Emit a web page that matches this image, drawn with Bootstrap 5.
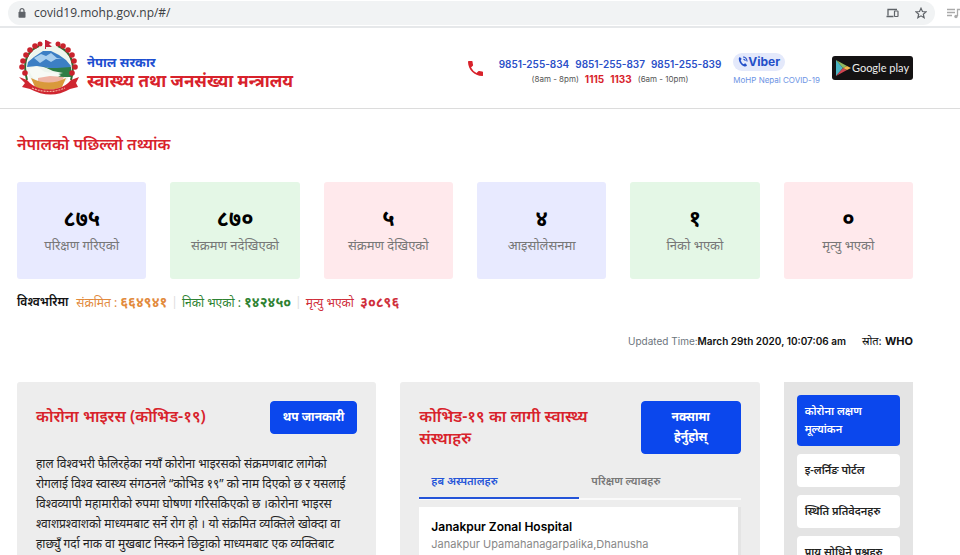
<!DOCTYPE html>
<html lang="hi">
<head>
<meta charset="utf-8">
<meta name="viewport" content="width=device-width, initial-scale=1">
<title>COVID-19 | स्वास्थ्य तथा जनसंख्या मन्त्रालय</title>
<link href="https://cdn.jsdelivr.net/npm/bootstrap@5.3.0/dist/css/bootstrap.min.css" rel="stylesheet">
<style>
:root { --blue: #0b47ed; --red: #d8222b; }
body { font-family: Inter, "Noto Sans", "Noto Sans Devanagari", sans-serif; font-size: 12px; line-height: 20px; color: #111; }
.deva { font-family: "Noto Sans", "Noto Sans Devanagari", sans-serif; }
a { text-decoration: none; }
.gutter { padding-left: 17px; padding-right: 47px; }
.browser-bar { height: 28px; border-bottom: 2px solid #e6e8ea; }
.omnibox { height: 24px; margin-left: 8px; padding: 0 8px 0 10px; border-radius: 12px; background: #f1f3f4; }
.address { border: 0; background: none; padding: 0; outline: 0; font: 12px/20px "Open Sans", sans-serif; color: #3c4043; }
.tool { border: 0; background: none; padding: 0; line-height: 0; color: #5f6368; }
.site-header { height: 81px; border-bottom: 1px solid #dcdcdc; }
.brand-top { color: #1d4fd0; font-size: 13px; line-height: 18px; }
.brand-main { color: var(--red); font-size: 17px; line-height: 20px; }
.brand-text { padding-top: 8px; }
.phones { font-size: 10px; line-height: 15px; }
.phone-list { gap: 6px; }
.phones a { color: #2b50c8; font-weight: 600; }
.phones .hours { font-size: 8px; color: #555; }
.phones .hours a { font-size: 10px; font-weight: 700; color: var(--red); }
.viber-link { margin: 0 12px; }
.viber { background: #e4e9fb; color: #2450c9; border-radius: 10px; font-size: 12px; line-height: 18px; padding: 0 5px; }
.viber-name { font-size: 8px; line-height: 14px; color: #6c93e4; }
.play { background: #141213; color: #eee; border-radius: 3px; height: 24px; width: 81px; font: 11px/24px Lato, sans-serif; }
.title-main { color: var(--red); font-size: 16px; line-height: 24px; margin: 23px 0 26px; }
.stat { height: 97px; border-radius: 3px; padding-top: 21px; }
.stat strong { font-size: 22px; line-height: 28px; color: #000; }
.stat span { font-size: 13px; line-height: 28px; color: #777; }
.tint-blue { background: #e8eaff; }
.tint-green { background: #e4f7e6; }
.tint-pink { background: #ffe9ec; }
.world { font-size: 12px; line-height: 22px; margin-top: 12px; }
.world b { font-size: 14px; }
.world .bar { color: #ddd; }
.tone-orange { color: #e28a3c; }
.tone-green { color: #2e8232; }
.tone-red { color: #cf2f3b; }
.updated { font-size: 11px; line-height: 20px; margin-top: 17px; }
.stamp { font-size: 10px; }
.panels { margin-top: 31px; }
.panel { background: #ededed; border-radius: 3px 3px 0 0; padding: 19px; }
.panel-title { color: var(--red); font-size: 16px; line-height: 22px; margin: 0; }
.btn-brand { --bs-btn-bg: var(--blue); --bs-btn-color: #fff; --bs-btn-border-color: var(--blue); --bs-btn-hover-bg: #083bc8; --bs-btn-hover-color: #fff; --bs-btn-border-radius: 4px; font-size: 12px; font-weight: 700; line-height: 20px; }
.more { padding: 5px 12px 6px; }
.map { width: 100px; padding: 5px 12px 6px; }
.story { font-size: 12px; line-height: 20px; margin: 20px 0 0; color: #222; }
.tab-row { border-bottom: 2px solid #fafafa; }
.tab-row .nav-link { background: none; width: 160px; border: 0; border-radius: 0; padding: 9px 12px 6px; font-size: 11px; line-height: 20px; font-weight: 600; color: #777; text-align: left; border-bottom: 2px solid transparent; margin-bottom: -1px; }
.tab-row .nav-link.active { color: #2454d8; border-bottom-color: #2454d8; }
.hospital { background: #fff; margin-top: 7px; padding: 11px 12px 24px; border-right: 3px solid #e4e4e4; }
.hospital h3 { font-size: 12px; line-height: 18px; margin: 0; color: #000; }
.hospital p { font-size: 11px; line-height: 16px; margin: 0; color: #888; }
.side { background: #e4e4e4; padding: 13px; }
.side a { background: #fff; color: #222; border-radius: 4px; padding: 7px 8px 8px; font-size: 11px; line-height: 18px; font-weight: 600; }
.side a.primary { background: var(--blue); color: #fff; }
</style>
<script src="https://cdn.jsdelivr.net/npm/bootstrap@5.3.0/dist/js/bootstrap.bundle.min.js" defer></script>
</head>
<body class="bg-white">
<div class="d-flex flex-column vh-100 overflow-hidden">
  <div class="browser-bar d-flex align-items-center flex-shrink-0">
    <div class="omnibox d-flex align-items-center flex-grow-1">
      <svg width="8" height="10" viewBox="0 0 8 10" aria-hidden="true"><path d="M2 4V2.700a2 2 0 0 1 4 0V4" fill="none" stroke="#5f6368" stroke-width="1.200"/><rect x=".5" y="3.800" width="7" height="6" rx=".8" fill="#5f6368"/></svg>
      <input class="address flex-grow-1 ms-2" type="text" aria-label="Address" value="covid19.mohp.gov.np/#/">
      <button class="tool me-3" type="button" aria-label="Send to device"><svg width="13" height="10" viewBox="0 0 13 10"><path d="M2 7.500V1.500h9M.5 8.500h7" fill="none" stroke="currentColor" stroke-width="1.300"/><rect x="8.500" y="3" width="3.500" height="5.500" rx=".5" fill="none" stroke="currentColor" stroke-width="1.200"/></svg></button>
      <button class="tool" type="button" aria-label="Bookmark"><svg width="12" height="12" viewBox="0 0 24 24"><path d="M12 2.500l2.900 6.600 7.100.6-5.400 4.700 1.700 7.100-6.300-3.800-6.300 3.800 1.700-7.100L2 9.700l7.100-.6z" fill="none" stroke="currentColor" stroke-width="2.400"/></svg></button>
    </div>
    <button class="tool ms-2 ps-1" type="button" aria-label="Media"><svg width="13" height="11" viewBox="0 0 13 11"><path d="M0 1.500h8M0 4.500h8M0 7.500h5M10.500 8V1.500H13" fill="none" stroke="#aaa" stroke-width="1.300"/><circle cx="9" cy="8.500" r="1.700" fill="#aaa"/></svg></button>
  </div>

  <header class="site-header gutter d-flex align-items-center flex-shrink-0">
    <a href="#" class="d-flex align-items-center deva fw-bold" aria-label="स्वास्थ्य तथा जनसंख्या मन्त्रालय">
      <svg class="me-2" width="62" height="56" viewBox="0 0 62 56" aria-hidden="true">
        <circle cx="32" cy="27" r="22" fill="#eef5ed"/>
        <path d="M11 22l6-5 9-6 8 0 8 4 7 5 5 6-2 4-20-2-12-2-10 1z" fill="#3c7fc4"/>
        <path d="M17 18l7-4 5 2 5-3 6 5 5 1-6 0-5 3-5-3-6 4z" fill="#a9cfee"/>
        <path d="M25 26l6 2 9 0 14-1v10L43 37l-6-2 9-2-10-2z" fill="#2e7d46"/>
        <path d="M12 29q8-5 12 0t12 3l8 3-10 6H20q-7-5-8-12z" fill="#f7faf5"/>
        <path d="M21 38l12-2 14 1-4 8H21z" fill="#efb5a4"/>
        <g fill="none" stroke="#2f6d31" stroke-width="2"><path d="M22 6Q3 14 10 40M41 6q20 9 13 34"/></g>
        <g fill="#c9222c"><circle cx="23" cy="4" r="2.500"/><circle cx="18" cy="6" r="2.800"/><circle cx="13" cy="10" r="2.800"/><circle cx="9" cy="15" r="2.800"/><circle cx="6" cy="21" r="2.800"/><circle cx="5" cy="27" r="2.800"/><circle cx="8" cy="33" r="2.800"/><circle cx="41" cy="4" r="2.500"/><circle cx="46" cy="6" r="2.800"/><circle cx="51" cy="10" r="2.800"/><circle cx="55" cy="15" r="2.800"/><circle cx="57" cy="21" r="2.800"/><circle cx="58" cy="27" r="2.800"/><circle cx="55" cy="33" r="2.800"/></g>
        <path d="M29 0l6 3-3 1 3 3h-6v2h-1V0z" fill="#c4223a"/>
        <path d="M14 38q18 9 35 0l-4 9q-14 6-27 0z" fill="#d9993b"/>
        <path d="M2 37l8 3q5 6 12 8 10 3 20 0 7-2 12-8l8-3-3 6 2 4-8 2q-19 11-40 0l-8-2 3-4z" fill="#cf2630"/>
        <path d="M15 48q17 7 33 0" fill="none" stroke="#f2b0a0" stroke-width="1.200" stroke-dasharray="2 1"/>
      </svg>
      <span class="brand-text"><span class="d-block brand-top">नेपाल सरकार</span><span class="d-block brand-main">स्वास्थ्य तथा जनसंख्या मन्त्रालय</span></span>
    </a>
    <div class="ms-auto d-flex align-items-center">
      <svg width="15" height="15" viewBox="3 3 18 18" aria-hidden="true"><path fill="#d8222b" d="M20 15.500c-1.250 0-2.450-.2-3.570-.57a1 1 0 0 0-1.020.24l-2.200 2.200a15.050 15.050 0 0 1-6.590-6.580l2.200-2.210a1 1 0 0 0 .25-1A11.400 11.400 0 0 1 8.500 4a1 1 0 0 0-1-1H4a1 1 0 0 0-1 1c0 9.390 7.610 17 17 17a1 1 0 0 0 1-1v-3.500a1 1 0 0 0-1-1z"/></svg>
      <div class="phones text-center ms-3 pt-2">
        <div class="phone-list d-flex"><a href="tel:9851255834">9851-255-834</a><a href="tel:9851255837">9851-255-837</a><a href="tel:9851255839">9851-255-839</a></div>
        <div class="hours phone-list d-flex justify-content-center"><span>(8am - 8pm)</span><a href="tel:1115">1115</a><a href="tel:1133">1133</a><span>(6am - 10pm)</span></div>
      </div>
      <a href="#" class="viber-link pt-1"><span class="viber d-inline-flex align-items-center fw-bold"><svg width="10" height="11" viewBox="0 0 11 12" aria-hidden="true"><path d="M2 1l2 2-1 2q1 3 3 4l2-1 2 2q-1 2-3 1.500Q1 9 .8 3 1 1.500 2 1z" fill="#2450c9"/><path d="M5.500 1q4 0 4.500 5M5.800 3.500q2 0 2.200 2" fill="none" stroke="#2450c9" stroke-width="1.200"/></svg>Viber</span><span class="viber-name d-block">MoHP Nepal COVID-19</span></a>
      <a href="#" class="play d-flex align-items-center justify-content-center text-nowrap"><svg class="flex-shrink-0" width="16" height="16" viewBox="0 0 16 16" aria-hidden="true"><path d="M0 0v16l7-8z" fill="#4ab5c4"/><path d="M0 0l11 6-4 2z" fill="#8dbb63"/><path d="M0 16l11-6-4-2z" fill="#cf4550"/><path d="M11 6l4 2-4 2-4-2z" fill="#f0b84b"/></svg>Google play</a>
    </div>
  </header>

  <main class="gutter flex-grow-1 d-flex flex-column">
    <h1 class="title-main deva fw-semibold">नेपालको पछिल्लो तथ्यांक</h1>
    <div class="row deva text-center">
      <div class="col-2"><div class="stat tint-blue"><strong class="d-block">८७५</strong><span class="d-block">परिक्षण गरिएको</span></div></div>
      <div class="col-2"><div class="stat tint-green"><strong class="d-block">८७०</strong><span class="d-block">संक्रमण नदेखिएको</span></div></div>
      <div class="col-2"><div class="stat tint-pink"><strong class="d-block">५</strong><span class="d-block">संक्रमण देखिएको</span></div></div>
      <div class="col-2"><div class="stat tint-blue"><strong class="d-block">४</strong><span class="d-block">आइसोलेसनमा</span></div></div>
      <div class="col-2"><div class="stat tint-green"><strong class="d-block">१</strong><span class="d-block">निको भएको</span></div></div>
      <div class="col-2"><div class="stat tint-pink"><strong class="d-block">०</strong><span class="d-block">मृत्यु भएको</span></div></div>
    </div>
    <div class="world deva d-flex">
      <span class="fw-semibold me-2">विश्वभरिमा</span>
      <span class="tone-orange">संक्रमित : <b>६६४९४१</b></span><span class="bar mx-1">|</span>
      <span class="tone-green">निको भएको : <b>१४२४५०</b></span><span class="bar mx-1">|</span>
      <span class="tone-red">मृत्यु भएको &nbsp;<b>३०८९६</b></span>
    </div>
    <div class="updated d-flex justify-content-end"><span class="stamp"><span class="text-secondary">Updated Time:</span><span class="fw-semibold">March 29th 2020, 10:07:06 am</span></span><span class="ms-3">स्रोत: <b>WHO</b></span></div>

    <div class="panels row flex-grow-1">
      <div class="col-5 d-flex"><section class="panel deva w-100">
        <div class="d-flex justify-content-between align-items-start"><h2 class="panel-title fw-semibold pt-1">कोरोना भाइरस (कोभिड-१९)</h2><a href="#" class="btn btn-brand more">थप जानकारी</a></div>
        <p class="story">हाल विश्वभरी फैलिरहेका नयाँ कोरोना भाइरसको संक्रमणबाट लागेको रोगलाई विश्व स्वास्थ्य संगठनले “कोभिड १९” को नाम दिएको छ र यसलाई विश्वव्यापी महामारीको रुपमा घोषणा गरिसकिएको छ ।कोरोना भाइरस श्वाशप्रश्वाशको माध्यमबाट सर्ने रोग हो । यो संक्रमित व्यक्तिले खोक्दा वा हाछ्युँ गर्दा नाक वा मुखबाट निस्कने छिट्टाको माध्यमबाट एक व्यक्तिबाट</p>
      </section></div>
      <div class="col-5 d-flex"><section class="panel w-100">
        <div class="d-flex justify-content-between align-items-start deva"><h2 class="panel-title fw-semibold pt-1">कोभिड-१९ का लागी स्वास्थ्य संस्थाहरु</h2><a href="#" class="btn btn-brand map flex-shrink-0">नक्सामा हेर्नुहोस्</a></div>
        <div class="nav tab-row deva mt-2" role="tablist"><button class="nav-link active" type="button" role="tab" aria-selected="true">हब अस्पतालहरु</button><button class="nav-link" type="button" role="tab" aria-selected="false">परिक्षण ल्याबहरु</button></div>
        <div class="hospital"><h3 class="fw-semibold">Janakpur Zonal Hospital</h3><p>Janakpur Upamahanagarpalika,Dhanusha</p></div>
      </section></div>
      <div class="col-2 d-flex"><nav class="side deva w-100 d-flex flex-column gap-2">
        <a href="#" class="primary">कोरोना लक्षण मूल्यांकन</a><a href="#">इ-लर्निङ पोर्टल</a><a href="#">स्थिति प्रतिवेदनहरु</a><a href="#">प्राय सोधिने प्रश्नहरु</a>
      </nav></div>
    </div>
  </main>
</div>
</body>
</html>
